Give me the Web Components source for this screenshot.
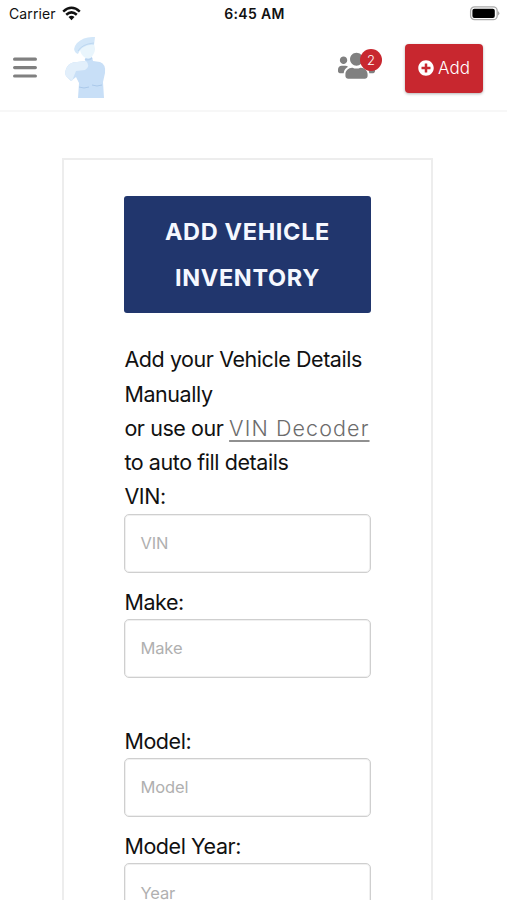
<!DOCTYPE html>
<html lang="en">
<head>
<meta charset="utf-8">
<title>Add Vehicle Inventory</title>
<style>
	body {
		margin: 0;
		height: 900px;
		overflow: hidden;
		background: #fff;
		color: #111;
		font-family: Inter, "Liberation Sans", sans-serif;
		--color-primary: #21366d;
		--color-action: #c8272f;
		--color-line: #ededed;
		--color-icon: #808080;
	}
</style>
</head>
<body>
<status-bar carrier="Carrier" time="6:45 AM"></status-bar>
<app-header count="2">Add</app-header>
<form-card>
	<title-button slot="title">Add Vehicle<br>Inventory</title-button>
	<form-intro>Add your Vehicle Details<br>Manually<br>or use our <a slot="link">VIN Decoder</a></form-intro>
	<form-field label="VIN:" hint="VIN"></form-field>
	<form-field label="Make:" hint="Make" class="gap"></form-field>
	<form-field label="Model:" hint="Model"></form-field>
	<form-field label="Model Year:" hint="Year"></form-field>
</form-card>

<script>
class BaseElement extends HTMLElement {
	constructor(){
		super();
		const template = document.createElement('template');
		template.innerHTML = this.constructor.markup;
		this.attachShadow({ mode: 'open' });
		this.shadowRoot.appendChild(template.content.cloneNode(true));
	}
}

class StatusBar extends BaseElement {
	static markup = `
	<style>
		:host {
			display: grid;
			grid-template-columns: 1fr auto 1fr;
			align-items: center;
			box-sizing: border-box;
			height: 28px;
			padding: 0 7px 1px 9px;
			font-size: 14px;
		}
		.left { display: flex; align-items: center; gap: 6px; }
		.carrier { letter-spacing: .1px; }
		.time { font-weight: 600; letter-spacing: .35px; }
		.battery { justify-self: end; }
		svg { display: block; }
	</style>
	<div class="left">
		<span class="carrier"></span>
		<svg width="19" height="15" viewBox="0 0 19 15">
			<g fill="none" stroke="#111" stroke-width="2.5">
				<path d="M1.2 5.6Q9.5-2 17.8 5.6"/>
				<path d="M4.2 8.8Q9.5 4 14.8 8.8"/>
			</g>
			<path d="M6.5 11.1Q9.5 8.5 12.5 11.1L9.5 14.2Z" fill="#111"/>
		</svg>
	</div>
	<span class="time"></span>
	<svg class="battery" width="31" height="16" viewBox="0 0 31 16">
		<rect x="1.6" y=".9" width="26.6" height="12.8" rx="4" fill="#fff" stroke="#aaa" stroke-width="1.3"/>
		<rect x="3.4" y="2.7" width="22.4" height="9.2" rx="2" fill="#000"/>
		<path d="M29 5Q31.8 7.3 29 9.6Z" fill="#aaa"/>
	</svg>`;
	connectedCallback(){
		this.shadowRoot.querySelector('.carrier').textContent = this.getAttribute('carrier');
		this.shadowRoot.querySelector('.time').textContent = this.getAttribute('time');
	}
}

class AppHeader extends BaseElement {
	static markup = `
	<style>
		:host {
			display: flex;
			align-items: center;
			box-sizing: border-box;
			height: 84px;
			padding: 0 24px 2px 13px;
			border-bottom: 2px solid #f7f7f7;
		}
		svg { display: block; }
		.logo { margin-left: 27px; }
		.users { position: relative; margin: 0 30px 5px auto; }
		.badge {
			position: absolute;
			left: 22px;
			top: -2px;
			width: 22px;
			height: 22px;
			border-radius: 50%;
			background: var(--color-action);
			color: #fff;
			font-size: 13px;
			font-weight: 300;
			line-height: 22px;
			text-align: center;
		}
		.add {
			display: flex;
			align-items: center;
			justify-content: center;
			gap: 4px;
			width: 78px;
			height: 49px;
			padding: 0;
			border: 0;
			border-radius: 4px;
			background: var(--color-action);
			box-shadow: 0 1px 3px rgba(0, 0, 0, .3);
			color: #fff;
			font: 300 17px Inter, sans-serif;
		}
	</style>
	<svg width="24" height="22" viewBox="0 0 24 22" stroke="#808080" stroke-width="3.2" stroke-linecap="round">
		<path d="M1.6 2.2h20.8M1.6 10.6h20.8M1.6 19h20.8"/>
	</svg>
	<svg class="logo" width="44" height="64" viewBox="0 0 44 64">
		<path d="M3 31Q6 26 13 26L21 25 22 21H28L29 25 36 26Q42 28 41 37L39 46 40 62H14L15 47 12 41 7 45 2 40Q0 36 3 31Z" fill="#c8dff7"/>
		<path d="M3 31Q6 26 13 26L22 25Q27 30 21 34L12 35 8 45 2 40Q0 36 3 31Z" fill="#e2effb"/>
		<path d="M16 12L29 6Q33 13 29 19Q26 25 20 21Q16 18 16 12Z" fill="#e9f5fc"/>
		<path d="M12 17Q8 13 13 7Q20 0 31 1L30 9Q24 8 18 12Q15 15 14 18Z" fill="#d3e7f9"/>
		<path d="M14 15Q18 8 30 7" fill="none" stroke="#bcd7f1" stroke-width="1"/>
		<path d="M15 51Q20 53 25 51M28 49Q33 51 38 49" fill="none" stroke="#abc9ea" stroke-width="1"/>
		<path d="M21 23Q25 25 28 22" fill="none" stroke="#b8d3ef" stroke-width="1.5"/>
	</svg>
	<div class="users">
		<svg width="37" height="29.6" viewBox="0 0 640 512" fill="#808080">
			<path d="M96 224c35.3 0 64-28.7 64-64s-28.7-64-64-64-64 28.7-64 64 28.7 64 64 64zm448 0c35.3 0 64-28.7 64-64s-28.7-64-64-64-64 28.7-64 64 28.7 64 64 64zm32 32h-64c-17.6 0-33.5 7.1-45.1 18.6 40.3 22.1 68.9 62 75.1 109.4h66c17.7 0 32-14.3 32-32v-32c0-35.3-28.7-64-64-64zm-256 0c61.9 0 112-50.1 112-112S381.9 32 320 32 208 82.1 208 144s50.1 112 112 112zm76.8 32h-8.3c-20.8 10-43.9 16-68.5 16s-47.6-6-68.5-16h-8.3C179.6 288 128 339.6 128 403.2V432c0 26.5 21.5 48 48 48h288c26.5 0 48-21.5 48-48v-28.8c0-63.6-51.6-115.2-115.2-115.2zm-223.7-13.4C161.5 263.1 145.6 256 128 256H64c-35.3 0-64 28.7-64 64v32c0 17.7 14.3 32 32 32h65.9c6.3-47.4 34.9-87.3 75.2-109.4z"/>
		</svg>
		<span class="badge"></span>
	</div>
	<button class="add">
		<svg width="16" height="16" viewBox="0 0 512 512" fill="#fff">
			<path d="M256 8C119 8 8 119 8 256s111 248 248 248 248-111 248-248S393 8 256 8zm144 276c0 6.6-5.4 12-12 12h-92v92c0 6.6-5.4 12-12 12h-56c-6.6 0-12-5.4-12-12v-92h-92c-6.6 0-12-5.4-12-12v-56c0-6.6 5.4-12 12-12h92v-92c0-6.6 5.4-12 12-12h56c6.6 0 12 5.4 12 12v92h92c6.6 0 12 5.4 12 12v56z"/>
		</svg>
		<slot></slot>
	</button>`;
	connectedCallback(){
		this.shadowRoot.querySelector('.badge').textContent = this.getAttribute('count');
	}
}

class FormCard extends BaseElement {
	static markup = `
	<style>
		:host {
			display: block;
			box-sizing: border-box;
			width: 371px;
			height: 800px;
			margin: 46px 0 0 62px;
			padding: 36.4px 60.5px 0 60.4px;
			border: 2px solid var(--color-line);
		}
		::slotted(.gap) { margin-bottom: 46px; }
	</style>
	<slot name="title"></slot>
	<slot></slot>`;
}

class TitleButton extends BaseElement {
	static markup = `
	<style>
		:host {
			display: block;
			box-sizing: border-box;
			height: 117px;
			padding-top: 12.5px;
			border-radius: 3px;
			background: var(--color-primary);
			color: #f5f8ff;
			font-size: 23.5px;
			font-weight: 650;
			line-height: 46.5px;
			letter-spacing: .65px;
			text-align: center;
			text-transform: uppercase;
		}
	</style>
	<slot></slot>`;
}

class FormIntro extends BaseElement {
	static markup = `
	<style>
		:host {
			display: block;
			margin-top: 29.1px;
			font-size: 21.5px;
			line-height: 34.2px;
			letter-spacing: -.43px;
			white-space: nowrap;
		}
		::slotted(a) {
			color: #6c6c6c;
			font-weight: 300;
			letter-spacing: 1.1px;
			text-decoration: underline;
			text-decoration-color: #909090;
			text-decoration-thickness: 2px;
			text-underline-offset: 4px;
		}
	</style>
	<slot></slot><slot name="link"></slot><br>to auto fill details`;
}

class FormField extends BaseElement {
	static markup = `
	<style>
		:host {
			display: block;
			margin-bottom: 12px;
		}
		label {
			display: block;
			font-size: 21.5px;
			line-height: 34.2px;
			letter-spacing: -.43px;
		}
		input {
			display: block;
			box-sizing: border-box;
			width: 100%;
			height: 59px;
			padding: 0 15px;
			border: 1px solid #cfcfcf;
			border-radius: 5px;
			background: #fff;
			box-shadow: inset 0 0 0 1px #f0f0f0;
			font: 16.5px Inter, sans-serif;
			letter-spacing: -.1px;
		}
		input::placeholder { color: #b0b0b0; opacity: 1; }
	</style>
	<label for="field"></label>
	<input id="field">`;
	connectedCallback(){
		this.shadowRoot.querySelector('label').textContent = this.getAttribute('label');
		this.shadowRoot.querySelector('input').placeholder = this.getAttribute('hint');
	}
}

window.customElements.define('status-bar', StatusBar);
window.customElements.define('app-header', AppHeader);
window.customElements.define('form-card', FormCard);
window.customElements.define('title-button', TitleButton);
window.customElements.define('form-intro', FormIntro);
window.customElements.define('form-field', FormField);
</script>
</body>
</html>
